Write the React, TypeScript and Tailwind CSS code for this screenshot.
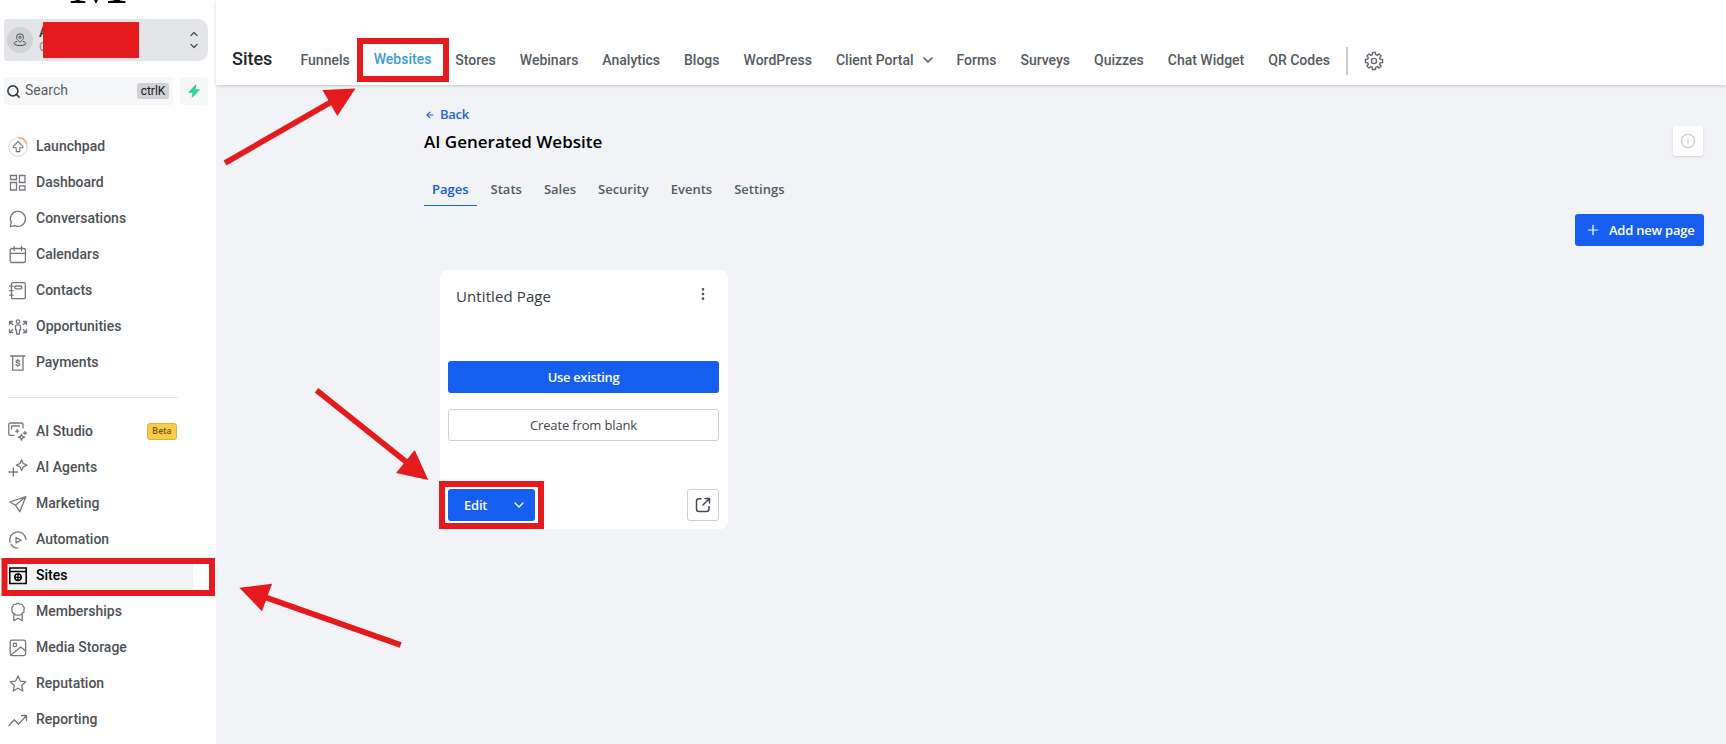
import type { ReactNode } from 'react'
import { ArrowLeft, ChevronDown, ChevronUp, EllipsisVertical, Info, Plus, Search } from 'lucide-react'

interface MenuItem {
  name: string
  icon: ReactNode
  badge?: string
  active?: boolean
}

function Icon({ children }: { children: ReactNode }) {
  return (
    <svg
      viewBox="0 0 20 20"
      className="h-5 w-5 shrink-0"
      fill="none"
      stroke="currentColor"
      strokeWidth="1.3"
      strokeLinecap="round"
      strokeLinejoin="round"
    >
      {children}
    </svg>
  )
}

const mainMenu: MenuItem[] = [
  {
    name: 'Launchpad',
    icon: (
      <Icon>
        <circle cx="10" cy="10" r="9.3" stroke="#cfd2d6" strokeWidth="0.9" />
        <path d="M10.5 .7A9.3 9.3 0 0 1 18.8 7" stroke="#f2a071" />
        <path d="M10 4.5 5.2 9.3v1.5h3v3.8h3.6v-3.8h3V9.3z" strokeWidth="1.1" />
      </Icon>
    ),
  },
  {
    name: 'Dashboard',
    icon: (
      <Icon>
        <path d="M2.5 2.5h6v4h-6zM11.5 2.5H17v7h-5.5zM2.5 9.5h6V17h-6zM11.5 12.8H17V17h-5.5z" strokeLinejoin="miter" />
      </Icon>
    ),
  },
  {
    name: 'Conversations',
    icon: (
      <Icon>
        <path d="M3.3 13.3 2.2 17.6l4.5-1A7.5 7.5 0 1 0 3.3 13.3z" />
      </Icon>
    ),
  },
  {
    name: 'Calendars',
    icon: (
      <Icon>
        <rect x="2.2" y="3.5" width="15.2" height="14" rx="1.5" />
        <path d="M2.2 8.3h15.2M6.2 1.5v4M13.5 1.5v4" />
      </Icon>
    ),
  },
  {
    name: 'Contacts',
    icon: (
      <Icon>
        <rect x="3.5" y="1.7" width="13.8" height="16" rx="1.3" />
        <rect x="6.8" y="5" width="7" height="2.8" rx="1" />
        <path d="M1.6 5.2h3.5M1.6 9.7h3.5M1.6 14.2h3.5" />
      </Icon>
    ),
  },
  {
    name: 'Opportunities',
    icon: (
      <Icon>
        <circle cx="10" cy="4.6" r="1.8" />
        <path d="M7.5 13V9.5q0-1.6 1.5-1.6h2q1.5 0 1.5 1.6V13h-1v4h-3v-4z" />
        <path d="M4.8 7.5 1.7 4.7M1.5 7.5v-3h3M15.2 7.5l3.1-2.8M18.5 7.5v-3h-3M4.8 12.5l-3.1 2.8M1.500 12.5v3h3M15.2 12.5l3.1 2.8M18.5 12.5v3h-3" />
      </Icon>
    ),
  },
  {
    name: 'Payments',
    icon: (
      <Icon>
        <path d="M2.5 3H17M4.6 3v14.2H15V3" strokeLinejoin="miter" />
        <path d="M11.6 8.3c-.4-.6-1-.8-1.8-.8-1 0-1.7.4-1.7 1.2 0 1.7 3.6.8 3.6 2.5 0 .9-.8 1.3-1.8 1.3-.8 0-1.5-.2-1.9-.9M9.8 6.5v1M9.8 12.5v1" />
      </Icon>
    ),
  },
]

const toolsMenu: MenuItem[] = [
  {
    name: 'AI Studio',
    badge: 'Beta',
    icon: (
      <Icon>
        <path d="M6 13.3H2.3q-1.5 0-1.5-1.5V2.5Q.8 1 2.3 1h11.2Q15 1 15 2.5v3.3M3.5 4h8M3.5 4v3" />
        <path d="m13.5 12.2.9 2.1 2.1.9-2.1.9-.9 2.1-.9-2.1-2.1-.9 2.1-.9zM9.2 7.5v3.2M7.6 9.1h3.2M17 9.5v3M15.5 11h3" />
      </Icon>
    ),
  },
  {
    name: 'AI Agents',
    icon: (
      <Icon>
        <path d="m13.7 1.8 1.6 3.7L19 7.2l-3.7 1.6-1.6 3.7L12 8.8 8.4 7.2 12 5.5zM5.3 9.8v8.4M1 14h8.5" />
      </Icon>
    ),
  },
  {
    name: 'Marketing',
    icon: (
      <Icon>
        <path d="M17.9 2.6 1.8 8l5.7 3.2 4.3 6.5zM7.5 11.2l10.4-8.6" />
      </Icon>
    ),
  },
  {
    name: 'Automation',
    icon: (
      <Icon>
        <path d="M2 12.5A8.2 8.2 0 1 1 18 9.3M3.1 14.3a8 8 0 0 0 6.4 3.9" />
        <path d="m8 7.5 5 2.6-5 2.8z" />
      </Icon>
    ),
  },
  {
    name: 'Sites',
    active: true,
    icon: (
      <Icon>
        <path d="M1.8 2h16.4v15.5H1.8zM1.8 5.5h16.4" strokeLinejoin="miter" strokeWidth="1.5" />
        <circle cx="10" cy="11.3" r="3.2" strokeWidth="1.5" />
        <path d="M6.7 11.3h6.6M10 8v6.6" strokeWidth="1.3" />
      </Icon>
    ),
  },
  {
    name: 'Memberships',
    icon: (
      <Icon>
        <path d="m10 1.2 1.9.9 2.1.2 1 1.9 1.3 1.6-.4 2.1.1 2.1-1.7 1.3-1.4 1.5-2.9.4-2.9-.4-1.4-1.5L4 10l.1-2.1-.4-2.1L5 4.2l1-1.9 2.1-.2z" />
        <path d="M5.8 12.5v6.2l4.2-2.4 4.2 2.4v-6.2" />
      </Icon>
    ),
  },
  {
    name: 'Media Storage',
    icon: (
      <Icon>
        <rect x="2.2" y="2.2" width="15.4" height="15.4" rx="1.8" />
        <circle cx="6.9" cy="6.9" r="1.7" />
        <path d="m3.2 16.8 9.5-7.8 4.9 4.1" />
      </Icon>
    ),
  },
  {
    name: 'Reputation',
    icon: (
      <Icon>
        <path d="m10 2 2.3 5.1 5.4.6-4 3.7 1.1 5.6-4.8-2.8L5.200 17l1.1-5.6-4-3.7 5.4-.6z" />
      </Icon>
    ),
  },
  {
    name: 'Reporting',
    icon: (
      <Icon>
        <path d="m1 15.5 5.3-5.7 4.2 4.5 7.8-8.5M13.5 5.5h5v5" />
      </Icon>
    ),
  },
]

const tabs = ['Pages', 'Stats', 'Sales', 'Security', 'Events', 'Settings']

const navItems = ['Funnels', 'Websites', 'Stores', 'Webinars', 'Analytics', 'Blogs', 'WordPress', 'Client Portal', 'Forms', 'Surveys', 'Quizzes', 'Chat Widget', 'QR Codes']

// four [radius, angle] corners per tooth, eight teeth in all
const gearPoints = Array.from({ length: 8 }, (_, i) => {
  const corners = [[6.5, -15], [8.7, -10], [8.7, 10], [6.5, 15]]
  return corners
    .map(([r, a]) => {
      const rad = ((i * 45 + a) * Math.PI) / 180
      return `${(10 + r * Math.cos(rad)).toFixed(2)},${(10 + r * Math.sin(rad)).toFixed(2)}`
    })
    .join(' ')
}).join(' ')

function MenuRow({ item }: { item: MenuItem }) {
  return (
    <a
      className={`flex h-9 items-center pl-2 text-sm font-medium ${item.active ? 'text-black' : 'text-[#4d5156]'}`}
    >
      <span className={`flex h-7 w-[185px] items-center gap-2 ${item.active ? 'bg-[#f2f4f7]' : ''}`}>
        <span className={`mt-0.5 ${item.active ? 'text-black' : 'text-[#74787d]'}`}>{item.icon}</span>
        <span>{item.name}</span>
        {item.badge && (
          <span className="mr-4 ml-auto flex h-[17px] w-[30px] items-center justify-center rounded-[3px] border border-[#d9b23f] bg-[#fdcb45] text-[9px] tracking-wide text-[#6b5a2a]">
            {item.badge}
          </span>
        )}
      </span>
    </a>
  )
}

function Sidebar() {
  return (
    <aside className="flex w-[216px] shrink-0 flex-col bg-white">
      <div className="flex h-[19px] items-start justify-center pr-5">
        <span className="-mt-[55px] font-['Liberation_Serif',serif] text-[66px] leading-[72px] text-black">M</span>
      </div>

      {/* Account switcher */}
      <div className="ml-1 flex h-[42px] w-[204px] items-center rounded-r-[10px] rounded-l-[3px] bg-[#e4e5e9] pl-[3px]">
        <div className="flex h-[26px] w-[26px] items-center justify-center rounded-full bg-[#d1d3d7] text-[#4b4f55]">
          <svg viewBox="0 0 14 14" className="h-3.5 w-3.5" fill="none" stroke="currentColor">
            <path d="M7 9.3C4.500 7 3.5 5.700 3.5 4.3a3.5 3.5 0 0 1 7 0C10.5 5.700 9.5 7 7 9.3z" />
            <circle cx="7" cy="4.3" r="1.1" />
            <path d="M4.2 8.5c-1.7.3-3 1-3 2.1 0 2.6 11.6 2.6 11.6 0 0-1.1-1.3-1.8-3-2.1" />
          </svg>
        </div>
        <div className="ml-1.5 flex w-1 flex-col">
          <span className="text-sm leading-[15px] font-medium text-[#30343a]">A</span>
          <span className="text-xs leading-[15px] text-[#858a91]">C</span>
        </div>
        <div className="relative h-9 w-24 bg-[#e51a1c]" />
        <div className="ml-auto flex w-7 flex-col items-center text-[#4c5056]">
          <ChevronUp className="h-3 w-3" strokeWidth={2.6} />
          <ChevronDown className="h-3 w-3" strokeWidth={2.6} />
        </div>
      </div>

      <div className="mt-4 ml-1 flex gap-[7px]">
        <div className="flex h-7 w-[169px] items-center rounded-[3px] bg-[#f5f7f9] pr-1 pl-0.5 text-sm text-[#5a5f66]">
          <Search className="h-[15px] w-[15px] text-[#3b3f45]" strokeWidth={2.6} />
          <span className="-mt-0.5 ml-1">Search</span>
          <kbd className="ml-auto flex h-4 w-8 items-center justify-center rounded-[2px] bg-[#d0d2d7] font-[Roboto,sans-serif] text-xs text-[#16181b]">
            ctrlK
          </kbd>
        </div>
        <div className="flex h-7 w-7 items-center justify-center rounded-[3px] bg-[#f5f7f9]">
          <svg viewBox="0 0 12 14" className="h-3.5 w-3" fill="#37d399">
            <path d="M7.8 .8 .7 8.3H5l-.8 5 7.2-7.500H7z" stroke="#37d399" strokeLinejoin="round" />
          </svg>
        </div>
      </div>

      <nav className="mt-[23px] flex flex-col">
        {mainMenu.map((item) => (
          <MenuRow key={item.name} item={item} />
        ))}
        <div className="mt-[17px] mb-[15px] ml-2 h-px w-[169px] bg-[#dcdfe2]" />
        {toolsMenu.map((item) => (
          <MenuRow key={item.name} item={item} />
        ))}
      </nav>
    </aside>
  )
}

function TopNav() {
  return (
    <header className="flex h-[85px] items-end bg-white px-4 pb-[10px] shadow-[0_1px_3px_rgba(0,0,0,0.18)]">
      <h2 className="flex h-8 w-[68.5px] items-center text-lg font-medium text-[#20252b]">Sites</h2>
      <nav className="flex h-[30px] items-center gap-[24px] text-sm font-medium text-[#555b61]">
        {navItems.map((item) => (
          <a key={item} className={`flex items-center ${item === 'Websites' ? 'pb-0.5 text-[#3d9be0]' : ''}`}>
            {item}
            {item === 'Client Portal' && <ChevronDown className="-mr-[3px] ml-[6px] h-4 w-4" strokeWidth={2.4} />}
          </a>
        ))}
      </nav>
      <div className="ml-4 h-7 w-0.5 bg-[#c9cbce]" />
      <svg
        viewBox="0 0 20 20"
        className="mb-1 ml-4 h-5 w-5 text-[#666a70]"
        fill="none"
        stroke="currentColor"
        strokeWidth="1.4"
        strokeLinejoin="round"
      >
        <polygon points={gearPoints} />
        <circle cx="10" cy="10" r="2.6" />
      </svg>
    </header>
  )
}

function PageCard() {
  return (
    <div className="flex h-[259px] w-[288px] flex-col rounded-lg bg-white pr-[9px] pb-2 pl-2">
      <div className="flex h-[50px] items-center justify-between pr-2 pl-2">
        <span className="pt-0.5 text-[15px] tracking-[0.1px] text-[#353a40]">Untitled Page</span>
        <EllipsisVertical className="-mt-0.5 h-4 w-4 text-[#50555b]" />
      </div>
      <button className="mt-[41px] h-8 rounded-[3px] bg-[#155eef] pt-0.5 text-[13px] font-semibold tracking-[-0.35px] text-white">
        Use existing
      </button>
      <button className="mt-4 h-8 rounded-[3px] border border-[#cdd0d5] pt-0.5 text-[13px] font-medium tracking-[-0.15px] text-[#3f454d]">
        Create from blank
      </button>
      <div className="mt-auto flex justify-between">
        <button className="flex h-8 w-[87px] items-center justify-between rounded-[3px] bg-[#155eef] pr-2 pl-4 text-[13px] font-semibold text-white">
          <span className="pt-0.5 tracking-[-0.2px]">Edit</span>
          <ChevronDown className="h-4 w-4" />
        </button>
        <button className="flex h-8 w-8 items-center justify-center rounded-[3px] border border-[#cdd0d5] text-[#454b52]">
          <svg viewBox="0 0 16 16" className="h-4 w-4" fill="none" stroke="currentColor" strokeWidth="1.5" strokeLinecap="round" strokeLinejoin="round">
            <path d="M6 1.7H4q-2.5 0-2.5 2.5V12q0 2.5 2.5 2.5h7.5q2.5 0 2.5-2.5V9.5M10 1.5h4.5V6M14.2 1.8 8 8" />
          </svg>
        </button>
      </div>
    </div>
  )
}

function Annotations() {
  return (
    <svg className="pointer-events-none absolute inset-0" width="1726" height="744" fill="none" stroke="#e51a1c">
      <g strokeWidth="6">
        <rect x="360" y="41" width="86" height="38" />
        <rect x="4.5" y="561" width="207.5" height="32" />
        <rect x="442" y="484" width="99" height="42" />
      </g>
      <g strokeWidth="5.7">
        <path d="M225 163 332 101.5" />
        <path d="M316.500 390.3 407 462.5" />
        <path d="M400.7 645 266 597.5" />
      </g>
      <g fill="#e51a1c" stroke="none">
        <path d="M355.5 88.5 322.5 90 337.3 116z" />
        <path d="M428.3 480 414.7 450 396 473z" />
        <path d="M239.3 587.7 272 583.7 262 611.3z" />
      </g>
    </svg>
  )
}

export default function App() {
  return (
    <div className="relative flex h-[744px] w-[1726px] overflow-hidden bg-[#f1f3f6] font-[Roboto,sans-serif]">
      <Sidebar />
      <div className="flex flex-1 flex-col">
        <TopNav />
        <main className="flex flex-1 flex-col pr-[22px] pl-[208px] font-['Open_Sans',sans-serif]">
          <div className="mt-5 flex h-5 items-center gap-1.5 text-[13px] font-semibold tracking-[-0.3px] text-[#2b62de]">
            <ArrowLeft className="-mr-px ml-px h-2.5 w-2.5" strokeWidth={2.8} />
            Back
          </div>
          <div className="mt-px flex h-[30px] items-center justify-between">
            <h1 className="pt-0.5 text-[17px] font-semibold text-black">AI Generated Website</h1>
            <div className="mr-px flex h-[30px] w-[30px] items-center justify-center rounded-[3px] bg-white shadow-sm">
              <Info className="h-4 w-4 text-[#cbced4]" strokeWidth={1.8} />
            </div>
          </div>

          <div className="mt-[17px] flex">
            {tabs.map((tab) => (
              <a
                key={tab}
                className={`mr-[6px] flex h-[33px] items-center border-b px-2 pt-0.5 text-[13px] font-semibold ${tab === 'Pages' ? 'border-[#155eef] text-[#155ad6]' : 'border-transparent text-[#545b64]'}`}
              >
                {tab}
              </a>
            ))}
          </div>

          <div className="mt-2 flex justify-end">
            <button className="flex h-8 w-[129px] items-center gap-2 rounded-[3px] bg-[#155eef] pl-[10px] text-[13px] font-semibold text-white">
              <Plus className="h-4 w-4" strokeWidth={1.8} />
              <span className="pt-0.5 tracking-[-0.22px]">Add new page</span>
            </button>
          </div>

          <div className="mt-6 ml-4">
            <PageCard />
          </div>
        </main>
      </div>
      <Annotations />
    </div>
  )
}
